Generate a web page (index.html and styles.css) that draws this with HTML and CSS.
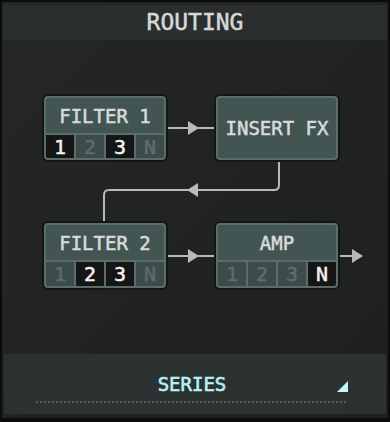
FILE: index.html
```html
<!DOCTYPE html>
<html lang="en">
<head>
    <meta charset="UTF-8">
    <meta name="viewport" content="width=device-width, initial-scale=1.0">
    <title>Routing</title>
    <link rel="stylesheet" href="styles.css">
</head>
<body>
    <div class="frame">
        <div class="header">ROUTING</div>

        <div class="diagram">
            <!-- connectors drawn in page coordinates -->
            <svg class="wires" viewBox="2 2 386 416" width="386" height="416">
                <g stroke="#b9b9b9" stroke-width="2" fill="none">
                    <line x1="167" y1="128" x2="189" y2="128" />
                    <line x1="198" y1="128" x2="215" y2="128" />
                    <path d="M279 160 V185 Q279 190 274 190 H109 Q104 190 104 195 V222" />
                    <line x1="167" y1="256" x2="189" y2="256" />
                    <line x1="198" y1="256" x2="215" y2="256" />
                    <line x1="339" y1="256" x2="353" y2="256" />
                </g>
                <g fill="#b9b9b9">
                    <polygon points="188,121 199,128 188,135" />
                    <polygon points="198,183 187,190 198,197" />
                    <polygon points="188,249 199,256 188,263" />
                    <polygon points="352,249 363,256 352,263" />
                </g>
            </svg>

            <div class="node">
                <div class="node-title">FILTER 1</div>
                <div class="slots">
                    <span class="slot on">1</span>
                    <span class="slot">2</span>
                    <span class="slot on">3</span>
                    <span class="slot">N</span>
                </div>
            </div>

            <div class="node node-single">
                <div class="node-title">INSERT FX</div>
            </div>

            <div class="node">
                <div class="node-title">FILTER 2</div>
                <div class="slots">
                    <span class="slot">1</span>
                    <span class="slot on">2</span>
                    <span class="slot on">3</span>
                    <span class="slot">N</span>
                </div>
            </div>

            <div class="node">
                <div class="node-title">AMP</div>
                <div class="slots">
                    <span class="slot">1</span>
                    <span class="slot">2</span>
                    <span class="slot">3</span>
                    <span class="slot on">N</span>
                </div>
            </div>
        </div>

        <div class="mode">
            <div class="mode-row">
                <span></span>
                <span class="mode-label">SERIES</span>
                <span class="mode-corner"></span>
            </div>
            <div class="dots"></div>
        </div>
    </div>
</body>
</html>
```

FILE: styles.css
```css
* {
    box-sizing: border-box;
}

body {
    margin: 0;
    background: #0c0c0c;
    font-family: 'DejaVu Sans Mono', 'Liberation Mono', monospace;
    width: 390px;
    height: 422px;
    overflow: hidden;
}

.frame {
    position: relative;
    margin: 2px 2px 0 2px;
    height: 416px;
    background: linear-gradient(to bottom right, #252626, #1e1f1f);
    display: flex;
    flex-direction: column;
}

.header {
    margin: 3px 1px 0 1px;
    height: 35px;
    background: #2b2e2e;
    color: #d6d8d8;
    font-size: 23px;
    -webkit-text-stroke: 0.5px #d6d8d8;
    text-align: center;
    line-height: 35px;
}

.wires {
    position: absolute;
    left: 0;
    top: 0;
    pointer-events: none;
}

.diagram {
    flex: 1;
    display: grid;
    grid-template-columns: 122px 122px;
    grid-template-rows: 64px 65px;
    column-gap: 50px;
    row-gap: 63px;
    padding: 56px 0 0 42px;
}

.node {
    position: relative;
    z-index: 1;
    background: #435553;
    border: 2px solid #5a6d6b;
    border-radius: 4px;
    box-shadow: 0 0 0 2px #141515;
    display: flex;
    flex-direction: column;
    overflow: hidden;
}

.node-title {
    height: 35px;
    color: #d8dcdb;
    font-size: 19px;
    -webkit-text-stroke: 0.5px #d8dcdb;
    text-align: center;
    line-height: 37px;
}

.node-single .node-title {
    height: auto;
    flex: 1;
    line-height: 60px;
}

.slots {
    flex: 1;
    display: grid;
    grid-template-columns: repeat(4, 1fr);
    gap: 2px;
    border-top: 2px solid #5a6d6b;
    background: #5a6d6b;
}

.slot {
    background: #3c4c4a;
    color: #5d6d6b;
    font-size: 20px;
    -webkit-text-stroke: 0.5px #5d6d6b;
    text-align: center;
    line-height: 24px;
}

.slot.on {
    background: #151515;
    color: #f2f2f2;
    -webkit-text-stroke: 0.5px #f2f2f2;
}

.mode {
    margin: 0 2px 4px 2px;
    height: 60px;
    background: #2c3132;
    padding: 20px 38px 0 32px;
}

.mode-row {
    display: grid;
    grid-template-columns: 1fr auto 1fr;
    align-items: end;
    height: 20px;
}

.mode-label {
    color: #b4f1f1;
    font-size: 19px;
    -webkit-text-stroke: 0.6px #b4f1f1;
    line-height: 20px;
}

.mode-corner {
    justify-self: end;
    width: 11px;
    height: 11px;
    margin-bottom: 2px;
    background: #c2f8f8;
    clip-path: polygon(100% 0, 100% 100%, 0 100%);
}

.dots {
    margin-top: 7px;
    height: 2px;
    background: repeating-linear-gradient(to right, #4f6060 0 2px, transparent 2px 4px);
}
```
